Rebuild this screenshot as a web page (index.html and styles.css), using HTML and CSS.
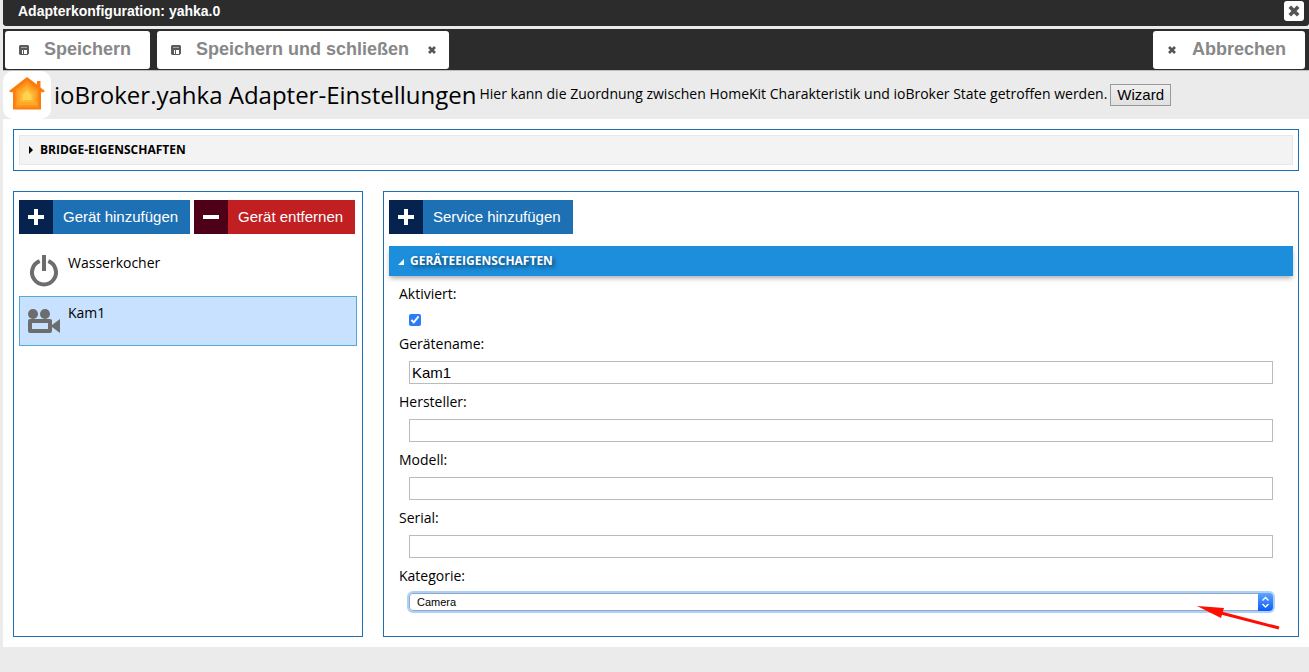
FILE: index.html
```html
<!DOCTYPE html>
<html lang="de">
<head>
<meta charset="utf-8">
<meta name="viewport" content="width=device-width, initial-scale=1">
<title>Adapterkonfiguration: yahka.0</title>
<link rel="stylesheet" href="styles.css">
</head>
<body>
<svg class="symbols" aria-hidden="true">
  <symbol id="disk" viewBox="0 0 10 10"><path fill="#5c5c5c" fill-rule="evenodd" d="M1 0h8l1 1v8H9v1H1L0 9V1zM3 5v4h1V5zM5 5v4h3V5z"/><path d="M2 2h6v1H2z" fill="#a5a5a5"/></symbol>
  <symbol id="cross" viewBox="0 0 10 10"><path d="M2 2l6 6M8 2l-6 6" stroke="#555" stroke-width="2.600" fill="none"/></symbol>
  <symbol id="plus" viewBox="0 0 16 16"><path d="M6 0h4v6h6v4h-6v6H6v-6H0V6h6z" fill="#fff"/></symbol>
  <symbol id="minus" viewBox="0 0 16 16"><path d="M0 6h16v4H0z" fill="#fff"/></symbol>
</svg>
<div class="dialog">
  <header class="titlebar">
    <span>Adapterkonfiguration: yahka.0</span>
    <button class="close" type="button" aria-label="Schließen"><svg class="close-icon"><use href="#cross"/></svg></button>
  </header>
  <div class="toolbar">
    <button class="tool" type="button"><svg class="tool-icon"><use href="#disk"/></svg><span>Speichern</span></button>
    <button class="tool tool-both" type="button"><svg class="tool-icon"><use href="#disk"/></svg><span>Speichern und schließen</span><svg class="tool-icon"><use href="#cross"/></svg></button>
    <button class="tool tool-cancel" type="button"><svg class="tool-icon"><use href="#cross"/></svg><span>Abbrechen</span></button>
  </div>
  <div class="intro">
    <svg class="logo" viewBox="0 0 48 48" aria-hidden="true">
      <rect width="48" height="48" rx="10" fill="#fff"/>
      <path d="M24 6L6 20l1.500 1.200H10V38.500h28V21.200h2.500L42 20l-4.500-3.500V10h-3.500v3.500z" fill="#fb7d0d"/>
      <path d="M24 10L12.500 19v17.500h23V19z" fill="#fe941c"/>
      <path d="M24 13.500L14.500 21v13h19V21z" fill="#fea829"/>
      <path d="M24 16.500L17 22.500V31h14v-8.500z" fill="#fdb935"/>
      <path d="M24 19.500l-4.500 4V29h9v-5.500z" fill="#fed34e"/>
    </svg>
    <h1>ioBroker.yahka Adapter-Einstellungen</h1>
    <p>Hier kann die Zuordnung zwischen HomeKit Charakteristik und ioBroker State getroffen werden.</p>
    <button class="wizard" type="button">Wizard</button>
  </div>
  <main>
    <section class="panel bridge">
      <button class="fold" type="button" aria-expanded="false"><svg class="fold-icon" viewBox="0 0 8 8"><path d="M2 0l4 4-4 4z"/></svg>BRIDGE-EIGENSCHAFTEN</button>
    </section>
    <div class="columns">
      <section class="panel devices">
        <div class="actions">
          <button class="action add" type="button"><span class="action-icon"><svg><use href="#plus"/></svg></span><span class="action-text">Gerät hinzufügen</span></button>
          <button class="action remove" type="button"><span class="action-icon"><svg><use href="#minus"/></svg></span><span class="action-text">Gerät entfernen</span></button>
        </div>
        <ul class="list">
          <li class="item">
            <svg viewBox="0 0 34 34"><path d="M12.700 7.200A12 12 0 1 0 21.300 7.200" fill="none" stroke="#6d6d6d" stroke-width="4"/><path d="M15 1h4v16h-4z" fill="#6d6d6d"/></svg>
            <span>Wasserkocher</span>
          </li>
          <li class="item selected">
            <svg viewBox="0 0 34 34"><g fill="#6d6d6d"><circle cx="6" cy="10" r="5"/><circle cx="18" cy="10" r="5"/><path fill-rule="evenodd" d="M3 15h20q2 0 2 2v10q0 2-2 2H3q-2 0-2-2V17q0-2 2-2zM5 19v6h16v-6z"/><path d="M25 21l8-6v14l-8-6z"/></g></svg>
            <span>Kam1</span>
          </li>
        </ul>
      </section>
      <section class="panel details">
        <div class="actions">
          <button class="action add" type="button"><span class="action-icon"><svg><use href="#plus"/></svg></span><span class="action-text">Service hinzufügen</span></button>
        </div>
        <button class="fold open" type="button" aria-expanded="true"><svg class="fold-icon" viewBox="0 0 8 8"><path d="M7 2v6H1z"/></svg>GERÄTEEIGENSCHAFTEN</button>
        <form class="fields">
          <label for="active">Aktiviert:</label>
          <div class="check-row"><input id="active" type="checkbox" checked></div>
          <label for="name">Gerätename:</label>
          <div class="field"><input id="name" type="text" value="Kam1"></div>
          <label for="maker">Hersteller:</label>
          <div class="field"><input id="maker" type="text"></div>
          <label for="model">Modell:</label>
          <div class="field"><input id="model" type="text"></div>
          <label for="serial">Serial:</label>
          <div class="field"><input id="serial" type="text"></div>
          <label for="category">Kategorie:</label>
          <div class="field">
            <div class="select">
              <select id="category"><option>Camera</option></select>
              <svg class="stepper" viewBox="0 0 15 18"><path d="M4.500 7.500l3-3 3 3M4.500 11l3 3 3-3" fill="none" stroke="#fff" stroke-width="1.400"/></svg>
            </div>
          </div>
        </form>
        <svg class="pointer" viewBox="0 0 84 26" aria-hidden="true"><path d="M24 8l58 15" stroke="#ff0d00" stroke-width="3" fill="none"/><path d="M0 1l27 2-3 10z" fill="#ff0d00"/></svg>
      </section>
    </div>
  </main>
</div>
</body>
</html>
```
FILE: styles.css
```css
* { box-sizing: border-box; }
body {
  margin: 0;
  background: #ebebeb;
  color: #000;
  font: 14px/20px "Open Sans", sans-serif;
}
button { font-family: "Liberation Sans", Arial, sans-serif; margin: 0; }
h1, p, ul { margin: 0; padding: 0; }
.symbols { display: none; }
.dialog { margin-left: 3px; background: #fff; }
.titlebar {
  display: flex;
  align-items: center;
  justify-content: space-between;
  height: 26px;
  padding: 0 5px 4px 15px;
  background: #2c2c2c;
  border-radius: 0 0 3px 3px;
  color: #fff;
  font: bold 14px/20px "Liberation Sans", Arial, sans-serif;
}
.close {
  display: grid;
  place-items: center;
  width: 20px;
  height: 20px;
  padding: 0;
  border: 0;
  border-radius: 3px;
  background: #fff;
}
.close-icon { width: 14px; height: 14px; }
.toolbar {
  display: flex;
  gap: 7px;
  margin-top: 3px;
  padding: 2px 4px 1px 2px;
  border-bottom: 1px solid #bdbdbd;
  background: #2c2c2c;
  box-shadow: 0 -3px #e9eceb;
}
.tool {
  display: flex;
  align-items: center;
  height: 38px;
  padding: 0 19px 0 14px;
  border: 0;
  border-radius: 3px;
  background: #fff;
  color: #888;
  font-size: 18px;
  font-weight: bold;
  gap: 15px;
}
.tool span { padding-bottom: 2px; }
.tool-both { padding-right: 12px; }
.tool-both span { padding-right: 3px; }
.tool-cancel { margin-left: auto; }
.tool-icon { width: 10px; height: 10px; }
.intro {
  display: flex;
  align-items: center;
  gap: 3px;
  background: #ebebeb;
}
.logo { width: 48px; height: 48px; flex: none; }
.intro h1 { font-size: 24px; font-weight: 400; line-height: 32px; }
.intro p { padding-bottom: 2px; }
.wizard {
  height: 22px;
  padding: 0 6px 2px;
  border: 1px solid #999;
  background: linear-gradient(#f0f0f0, #e0e0e0);
  color: #000;
  font-size: 15px;
}
main { padding: 10px; }
.panel { border: 1px solid #1d70b3; padding: 5px; }
.columns { display: grid; grid-template-columns: 350px 1fr; gap: 20px; margin-top: 20px; }
.columns .panel { padding-top: 8px; }
.fold {
  display: flex;
  align-items: center;
  gap: 5px;
  width: 100%;
  height: 30px;
  padding: 0 7px;
  border: 1px solid #e8e8e8;
  background: #f3f3f3;
  color: #000;
  font: bold 12px/20px "Open Sans", sans-serif;
}
.fold-icon { width: 8px; height: 8px; }
.fold.open {
  border-color: #1d8edb;
  background: #1d8edb;
  color: #fff;
  fill: #fff;
  text-shadow: 2px 2px 4px rgba(0, 0, 0, .6);
  box-shadow: 0 3px 5px -1px rgba(0, 0, 0, .35);
}
.actions { display: flex; gap: 4px; margin-bottom: 12px; }
.action {
  display: flex;
  flex: none;
  height: 34px;
  padding: 0;
  border: 0;
  color: #fff;
  font-size: 15px;
  line-height: 34px;
  white-space: nowrap;
}
.action-icon { display: grid; place-items: center; width: 34px; height: 34px; }
.action-icon svg { width: 16px; height: 16px; }
.action-text { padding: 0 12px 0 10px; }
.add { background: #1d70b3; }
.add .action-icon { background: #06234f; }
.remove { background: #c11f22; }
.remove .action-icon { background: #4f0019; }
.list { list-style: none; }
.item { display: flex; gap: 7px; height: 50px; padding: 7px; border: 1px solid transparent; line-height: 18px; }
.item svg { width: 34px; height: 34px; }
.selected { border-color: #58a8d4; background: #c7e1ff; }
.details { position: relative; }
.fields { display: flex; flex-direction: column; padding: 8px 10px 12px; }
.check-row { display: flex; align-items: center; height: 30px; padding: 2px 10px 0; }
.check-row input { width: 12px; height: 12px; margin: 0; accent-color: #2b7cf6; }
.field { padding: 7px 10px 8px; }
.field input {
  display: block;
  width: 100%;
  height: 23px;
  padding: 0 2px;
  border: 1px solid #bbb;
  background: #fff;
  font: 15px "Liberation Sans", Arial, sans-serif;
}
.select { position: relative; border-radius: 4px; box-shadow: 0 0 0 2px #aed0f8; }
.select select {
  display: block;
  appearance: none;
  width: 100%;
  height: 18px;
  padding: 0 20px 0 7px;
  border: 1px solid #90a9c6;
  border-radius: 4px;
  outline: 0;
  background: #fff;
  color: #000;
  font: 11px "Liberation Sans", Arial, sans-serif;
}
.stepper {
  position: absolute;
  top: 0;
  right: 0;
  width: 15px;
  height: 18px;
  border-radius: 0 4px 4px 0;
  background: linear-gradient(#5fa5fa, #0b5cfb);
  pointer-events: none;
}
.pointer { position: absolute; right: 17px; bottom: 5px; width: 84px; height: 26px; }
```
